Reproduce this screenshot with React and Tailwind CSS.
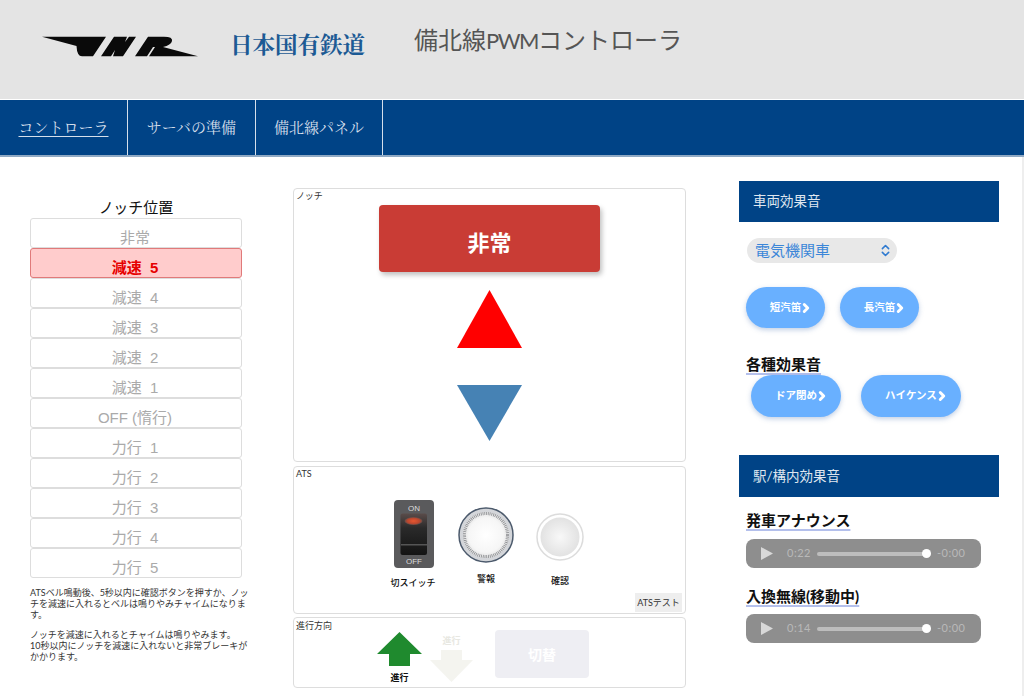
import React from "react";
import { ChevronRight, ChevronsUpDown } from "lucide-react";

const notches = [
  "非常",
  "減速  5",
  "減速  4",
  "減速  3",
  "減速  2",
  "減速  1",
  "OFF (惰行)",
  "力行  1",
  "力行  2",
  "力行  3",
  "力行  4",
  "力行  5",
];

function JnrLogo() {
  return (
    <svg width="156" height="21" viewBox="0 0 156 21" className="block">
      <path d="M0 .7H64L51 20.3H40Q35 20.3 34.5 10Z" fill="#0a0a0a" />
      <path d="M59 20.3L72 .7H85L83 6L87 .7H94L81 20.3H71L73 14L69 20.3Z" fill="#0a0a0a" />
      <path d="M93 20.3L106 .7H122Q131 .7 130 5Q129 9 121 11L156 20.3H107L113 11H111L105 20.3Z" fill="#0a0a0a" />
    </svg>
  );
}

function SwitchIcon() {
  return (
    <svg width="40" height="68" viewBox="0 0 40 68" className="block ml-[2px]">
      <defs>
        <linearGradient id="rocker" x1="0" y1="0" x2="0" y2="1">
          <stop offset="0" stopColor="#5a4c4a" />
          <stop offset="0.35" stopColor="#2a2a2a" />
          <stop offset="1" stopColor="#141414" />
        </linearGradient>
        <radialGradient id="glow">
          <stop offset="0" stopColor="#e8562f" />
          <stop offset="0.7" stopColor="#b8472f" />
          <stop offset="1" stopColor="#5a4c4a" />
        </radialGradient>
      </defs>
      <rect width="40" height="68" rx="4" fill="#5a5a5c" />
      <rect x="6.5" y="13.5" width="26.5" height="41.5" rx="2" fill="url(#rocker)" />
      <rect x="7" y="44" width="26" height="1.5" fill="#555" />
      <ellipse cx="19.5" cy="21" rx="9" ry="4" fill="url(#glow)" />
      <text x="20" y="10.5" textAnchor="middle" fontSize="8" fill="#ddd" fontFamily="Liberation Sans, sans-serif">ON</text>
      <text x="20" y="64" textAnchor="middle" fontSize="8" fill="#ddd" fontFamily="Liberation Sans, sans-serif">OFF</text>
    </svg>
  );
}

function BellIcon() {
  return (
    <svg width="56" height="56" viewBox="0 0 56 56" className="block">
      <defs>
        <radialGradient id="bell">
          <stop offset="0" stopColor="#ffffff" />
          <stop offset="0.75" stopColor="#f6f6f6" />
          <stop offset="1" stopColor="#e0e0e0" />
        </radialGradient>
      </defs>
      <circle cx="28" cy="28" r="27" fill="#d4d6da" stroke="#4c5a6c" strokeWidth="1.5" />
      <circle cx="28" cy="28" r="23" fill="url(#bell)" />
      <circle cx="28" cy="28" r="21.5" fill="none" stroke="#8a8c90" strokeWidth="3" strokeDasharray="0.8 1" />
    </svg>
  );
}

function LampIcon() {
  return (
    <svg width="48" height="48" viewBox="0 0 48 48" className="block">
      <defs>
        <radialGradient id="lamp">
          <stop offset="0" stopColor="#f8f8f8" />
          <stop offset="1" stopColor="#e2e2e2" />
        </radialGradient>
      </defs>
      <circle cx="24" cy="24" r="23" fill="#fff" stroke="#dcdcdc" strokeWidth="1.5" />
      <circle cx="24" cy="24" r="19.5" fill="url(#lamp)" />
    </svg>
  );
}

function SoundButton({ label, className }) {
  return (
    <button className={`flex items-center justify-center pl-[12px] rounded-full bg-[#69b0ff] text-white font-bold text-[10.5px] shadow-[0_2px_5px_rgba(80,120,180,0.35)] ${className}`}>
      {label}
      <ChevronRight size={14} strokeWidth={5} className="-ml-[2px]" />
    </button>
  );
}

function AudioBar({ time }) {
  return (
    <div className="flex items-center w-[235px] h-[29px] rounded-lg bg-[#8e8e8e] pl-[15px] pr-[14px] text-[11px] text-[#b9b9b9]">
      <svg width="12" height="13" viewBox="0 0 12 13" className="block">
        <path d="M0 0L12 6.5L0 13Z" fill="#d8d8d8" />
      </svg>
      <span className="ml-[14px] w-[30px] tracking-[0.5px]">{time}</span>
      <div className="flex items-center w-[114px] h-[4px] rounded-full bg-[#bdbdbd] justify-end">
        <div className="w-[9px] h-[9px] rounded-full bg-white" />
      </div>
      <span className="ml-[6px] tracking-[0.5px]">-0:00</span>
    </div>
  );
}

function SectionHeader({ children, className = "" }) {
  return (
    <div className={`flex items-center pl-[14px] bg-[#004386] text-[#dfe6ef] text-[13.5px] ${className}`}>
      {children}
    </div>
  );
}

function SubTitle({ children, className = "" }) {
  return (
    <div className={`h-[20px] leading-[20px] text-[15px] font-bold text-[#111] underline decoration-[#b4c0ec] decoration-2 underline-offset-[3px] [text-decoration-skip-ink:none] ${className}`}>
      {children}
    </div>
  );
}

export default function App() {
  return (
    <div className="w-[1024px] h-[696px] overflow-hidden bg-white font-['Lato','Noto_Sans_CJK_JP',sans-serif] text-[#222]">
      {/* header */}
      <div className="flex h-[99px] bg-[#e4e4e4]">
        <div className="ml-[42px] mt-[36px]">
          <JnrLogo />
        </div>
        <div className="ml-[32px] mt-[28px] w-[136px] text-[22.5px] leading-[30px] font-bold text-[#1c5a94] font-['Noto_Serif_CJK_JP','Liberation_Serif','Noto_Sans_CJK_JP',serif] whitespace-nowrap">
          日本国有鉄道
        </div>
        <div className="ml-[48px] mt-[24px] text-[24px] leading-[32px] text-[#555] whitespace-nowrap">
          備北線<span className="text-[22px] tracking-[-1.5px]">PWM</span>コントローラ
        </div>
      </div>

      {/* nav */}
      <div className="flex h-[58px] bg-[#004386] border-t border-b-2 border-t-white border-b-[#8fa9c4] text-[15px] text-[#d5dfeb] font-['Noto_Serif_CJK_JP','Liberation_Serif','Noto_Sans_CJK_JP',serif]">
        <div className="flex items-center justify-center w-[128px] border-r border-[#d5dfeb]">
          <span className="underline underline-offset-3">コントローラ</span>
        </div>
        <div className="flex items-center justify-center w-[128px] border-r border-[#d5dfeb]">サーバの準備</div>
        <div className="flex items-center justify-center w-[127px] border-r border-[#d5dfeb]">備北線パネル</div>
      </div>

      <div className="flex pl-[30px] pt-[24px] border-r-2 border-[#eeeeee] h-[539px]">
        {/* left column */}
        <div className="w-[212px] shrink-0">
          <div className="mt-[16px] h-[20px] leading-[20px] text-center text-[15px] text-[#111]">ノッチ位置</div>
          <div className="mt-[1px] flex flex-col">
            {notches.map((n, i) => (
              <div
                key={n}
                className={`h-[30px] flex items-end justify-center pr-[2px] rounded-[3px] text-[15px] leading-[18px] font-['Liberation_Sans','Noto_Sans_CJK_JP',sans-serif] whitespace-pre ${
                  i === 1
                    ? "bg-[#ffcccc] border border-[#e07a7a] font-bold text-[#e60000]"
                    : "bg-white border border-[#dddddd] text-[#aaaaaa]"
                }`}
              >
                {n}
              </div>
            ))}
          </div>
          <div className="mt-[9px] w-[220px] text-[9px] leading-[11px] text-[#333]">
            <p>ATSベル鳴動後、5秒以内に確認ボタンを押すか、ノッチを減速に入れるとベルは鳴りやみチャイムになります。</p>
            <p className="mt-[9px]">
              ノッチを減速に入れるとチャイムは鳴りやみます。
              <br />
              10秒以内にノッチを減速に入れないと非常ブレーキがかかります。
            </p>
          </div>
        </div>

        {/* center column */}
        <div className="ml-[51px] mt-[7px] w-[393px] shrink-0 flex flex-col gap-[4px]">
          <div className="flex flex-col items-center h-[274px] border border-[#dddddd] rounded-[4px]">
            <div className="self-start pl-[2px] pt-[2px] text-[9px] leading-[10px] text-[#333]">ノッチ</div>
            <button className="mt-[4px] w-[221px] h-[67px] rounded-[4px] bg-[#c93c35] text-white text-[22px] font-bold shadow-[2px_3px_5px_rgba(0,0,0,0.25)]">
              <span className="relative top-[4px]">非常</span>
            </button>
            <svg width="65" height="58" viewBox="0 0 65 58" className="mt-[18px] block">
              <path d="M32.5 0L65 58H0Z" fill="#ff0000" />
            </svg>
            <svg width="65" height="56" viewBox="0 0 65 56" className="mt-[37px] block">
              <path d="M0 0H65L32.5 56Z" fill="#4682b4" />
            </svg>
          </div>

          <div className="flex flex-col h-[148px] border border-[#dddddd] rounded-[4px]">
            <div className="pl-[2px] pt-[2px] text-[9px] leading-[10px] text-[#333]">ATS</div>
            <div className="flex mt-[21px] ml-[96px]">
              <div className="flex flex-col items-center w-[46px]">
                <SwitchIcon />
                <div className="mt-[10px] text-[9px] leading-[10px] font-medium text-[#111] whitespace-nowrap">切スイッチ</div>
              </div>
              <div className="flex flex-col items-center ml-[22px] pt-[7px]">
                <BellIcon />
                <div className="mt-[11px] text-[9px] leading-[10px] font-medium text-[#111]">警報</div>
              </div>
              <div className="flex flex-col items-center ml-[22px] pt-[13px]">
                <LampIcon />
                <div className="mt-[15px] text-[9px] leading-[10px] font-medium text-[#111]">確認</div>
              </div>
              <button className="ml-[51px] mt-[93px] w-[47px] h-[19px] bg-[#eeeeee] text-[9px] text-[#333] whitespace-nowrap">ATSテスト</button>
            </div>
          </div>

          <div className="flex flex-col h-[71px] -mt-[1px] border border-[#dddddd] rounded-[4px]">
            <div className="pl-[2px] pt-[3px] h-[11px] text-[9px] leading-[10px] text-[#333]">進行方向</div>
            <div className="flex ml-[83px]">
              <div className="flex flex-col items-center w-[45px] pt-[3px]">
                <svg width="45" height="34" viewBox="0 0 45 34" className="block">
                  <path d="M22.5 0L45 22H33V34H12V22H0Z" fill="#1f8a2e" />
                </svg>
                <div className="mt-[7px] text-[9px] leading-[10px] font-bold text-[#111]">進行</div>
              </div>
              <div className="flex flex-col items-center ml-[8px] w-[43px] pt-[7px]">
                <div className="text-[9px] leading-[10px] font-bold text-[#e8e8e2]">進行</div>
                <svg width="43" height="32" viewBox="0 0 43 32" className="mt-[4px] block">
                  <path d="M11 0H32V10H43L21.5 32L0 10H11Z" fill="#f4f4ef" />
                </svg>
              </div>
              <button className="ml-[22px] mt-[1px] w-[94px] h-[48px] rounded-[4px] bg-[#eeeef3] text-white text-[14px] font-bold">切替</button>
            </div>
          </div>
        </div>

        {/* right column */}
        <div className="ml-[53px] w-[260px] shrink-0">
          <SectionHeader className="h-[41px]">車両効果音</SectionHeader>
          <div className="mt-[16px] ml-[8px] flex items-center justify-between w-[150px] h-[25px] pl-[8px] pr-[4px] rounded-full bg-[#e8e8e8] text-[15px] text-[#3b86d8]">
            電気機関車
            <ChevronsUpDown size={15} strokeWidth={2.5} className="text-[#2f7ad0]" />
          </div>
          <div className="mt-[24px] ml-[7px] flex gap-[15px]">
            <SoundButton label="短汽笛" className="w-[79px] h-[41px]" />
            <SoundButton label="長汽笛" className="w-[79px] h-[41px]" />
          </div>
          <SubTitle className="mt-[26px] ml-[7px]">各種効果音</SubTitle>
          <div className="mt-[1px] ml-[12px] flex gap-[20px]">
            <SoundButton label="ドア閉め" className="w-[90px] h-[42px]" />
            <SoundButton label="ハイケンス" className="w-[100px] h-[42px]" />
          </div>
          <SectionHeader className="h-[42px] mt-[38px]">駅/構内効果音</SectionHeader>
          <SubTitle className="mt-[13px] ml-[7px]">発車アナウンス</SubTitle>
          <div className="mt-[9px] ml-[7px]">
            <AudioBar time="0:22" />
          </div>
          <SubTitle className="mt-[18px] ml-[7px]">入換無線(移動中)</SubTitle>
          <div className="mt-[8px] ml-[7px]">
            <AudioBar time="0:14" />
          </div>
        </div>
      </div>
    </div>
  );
}
